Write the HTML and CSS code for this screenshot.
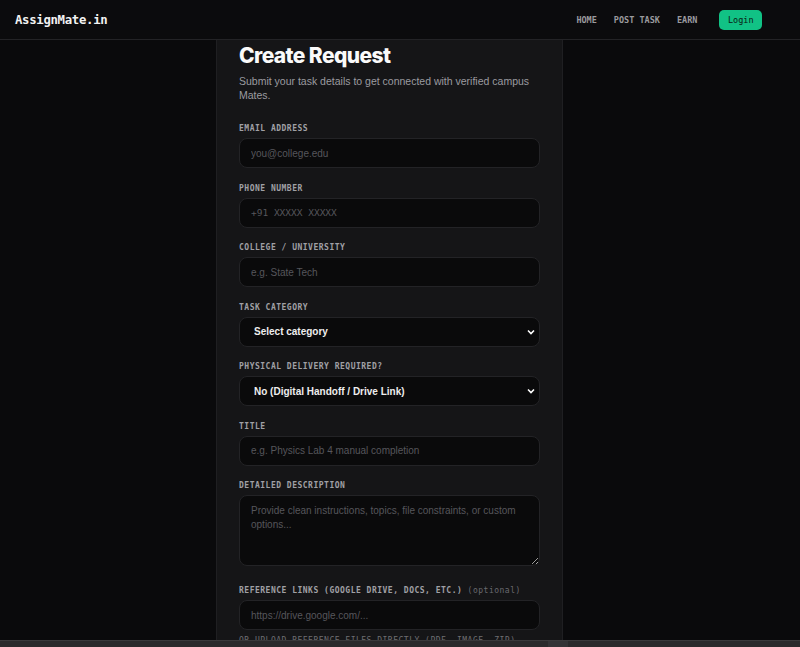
FILE: index.html
```html
<!DOCTYPE html>
<html>
<head>
    <meta charset="UTF-8">
    <title>AssignMate.in - Create Request</title>
    <link rel="stylesheet" href="styles.css">
</head>
<body>

    <header class="topbar">
        <div class="logo">AssignMate.in</div>
        <nav class="nav">
            <a href="#">HOME</a>
            <a href="#">POST TASK</a>
            <a href="#">EARN</a>
            <a href="#" class="login">Login</a>
        </nav>
    </header>

    <main class="page">
        <div class="card">
            <h1>Create Request</h1>
            <p class="sub">Submit your task details to get connected with verified campus Mates.</p>

            <div class="field">
                <label>EMAIL ADDRESS</label>
                <input type="text" placeholder="you@college.edu">
            </div>
            <div class="field">
                <label>PHONE NUMBER</label>
                <input type="text" class="mono" placeholder="+91 XXXXX XXXXX">
            </div>
            <div class="field">
                <label>COLLEGE / UNIVERSITY</label>
                <input type="text" placeholder="e.g. State Tech">
            </div>
            <div class="field">
                <label>TASK CATEGORY</label>
                <select>
                    <option>Select category</option>
                </select>
            </div>
            <div class="field">
                <label>PHYSICAL DELIVERY REQUIRED?</label>
                <select>
                    <option>No (Digital Handoff / Drive Link)</option>
                </select>
            </div>
            <div class="field">
                <label>TITLE</label>
                <input type="text" placeholder="e.g. Physics Lab 4 manual completion">
            </div>
            <div class="field field-wide">
                <label>DETAILED DESCRIPTION</label>
                <textarea placeholder="Provide clean instructions, topics, file constraints, or custom options..."></textarea>
            </div>
            <div class="field field-tight">
                <label>REFERENCE LINKS (GOOGLE DRIVE, DOCS, ETC.) <span class="opt">(optional)</span></label>
                <input type="text" placeholder="https://drive.google.com/...">
            </div>
            <div class="field">
                <label class="dim">OR UPLOAD REFERENCE FILES DIRECTLY (PDF, IMAGE, ZIP) (OPTIONAL)</label>
            </div>
        </div>
    </main>

    <div class="scrollbar"><div class="thumb"></div></div>

</body>
</html>
```

FILE: styles.css
```css
html, body {
    margin: 0;
    padding: 0;
    height: 100%;
    overflow: hidden;
}
body {
    background-color: #0a0a0c;
    color: #e6e6e6;
    font-family: "Liberation Sans", Arial, sans-serif;
}
.topbar {
    height: 40px;
    box-sizing: border-box;
    border-bottom: 1px solid #232326;
    background-color: #0b0b0d;
    display: flex;
    align-items: center;
    justify-content: space-between;
    padding: 0 38px 0 15px;
}
.logo {
    font-family: "DejaVu Sans Mono", monospace;
    font-weight: bold;
    font-size: 12.3px;
    color: #f2f2f2;
    letter-spacing: -0.3px;
}
.nav {
    display: flex;
    align-items: center;
    gap: 17px;
}
.nav a {
    font-family: "DejaVu Sans Mono", monospace;
    font-weight: bold;
    font-size: 8.5px;
    color: #9a9a9e;
    text-decoration: none;
}
.nav a.login {
    margin-left: 5px;
    background-color: #11c285;
    color: #0b1a13;
    font-weight: normal;
    padding: 5px 8.5px;
    border-radius: 5px;
}
.page {
    padding-left: 216px;
}
.card {
    width: 347px;
    box-sizing: border-box;
    background-color: #151517;
    border-left: 1px solid #1f1f22;
    border-right: 1px solid #1f1f22;
    padding: 2px 22px 0 22px;
}
h1 {
    margin: 0;
    font-family: Inter, "Liberation Sans", sans-serif;
    font-weight: 800;
    font-size: 21px;
    letter-spacing: -0.6px;
    line-height: 28px;
    color: #fafafa;
}
.sub {
    margin: 4px 0 21px 0;
    font-size: 10.5px;
    line-height: 14px;
    color: #9b9ba0;
}
.field {
    display: flex;
    flex-direction: column;
    margin-bottom: 14.5px;
}
.field-wide {
    margin-bottom: 19px;
}
.field-tight {
    margin-bottom: 5px;
}
.field label {
    font-family: "DejaVu Sans Mono", monospace;
    font-weight: bold;
    font-size: 8px;
    line-height: 12px;
    color: #a0a0a5;
    letter-spacing: 0.5px;
    margin-bottom: 3px;
}
.field label.dim {
    color: #6e6e72;
    font-weight: normal;
}
.opt {
    color: #6a6a70;
    font-weight: normal;
}
input, select, textarea {
    box-sizing: border-box;
    width: 100%;
    background-color: #0a0a0b;
    border: 1px solid #232326;
    border-radius: 8px;
    color: #eee;
    font-family: "Liberation Sans", Arial, sans-serif;
    font-size: 10px;
    outline: none;
}
input {
    height: 30px;
    padding: 0 11px;
}
input.mono {
    font-family: "DejaVu Sans Mono", monospace;
    font-size: 9.5px;
}
input::placeholder, textarea::placeholder {
    color: #56565b;
}
select {
    height: 30px;
    padding: 0 14px;
    font-weight: bold;
    font-size: 10px;
    appearance: none;
    -webkit-appearance: none;
    background-image: url("data:image/svg+xml;utf8,<svg xmlns='http://www.w3.org/2000/svg' width='8' height='6' viewBox='0 0 8 6'><path d='M1 1.5 L4 4.5 L7 1.5' fill='none' stroke='white' stroke-width='1.6'/></svg>");
    background-repeat: no-repeat;
    background-position: right 4px center;
}
textarea {
    height: 71px;
    padding: 8px 11px;
    line-height: 14px;
    resize: vertical;
}
.scrollbar {
    position: fixed;
    left: 0;
    right: 0;
    bottom: 0;
    height: 6px;
    background-color: #2a2a2c;
    border-top: 1px solid #3a3a3c;
}
.thumb {
    width: 20px;
    height: 6px;
    margin-left: 548px;
    background-color: #333336;
}
```
